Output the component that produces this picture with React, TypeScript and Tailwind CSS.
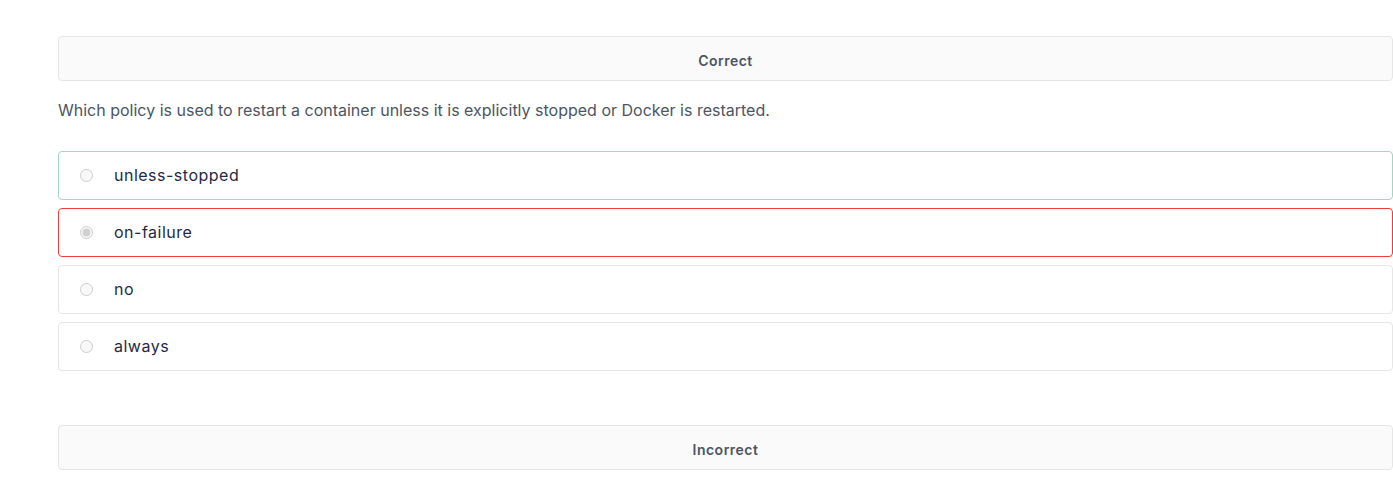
const options = [
  { label: "unless-stopped", state: "correct" },
  { label: "on-failure", state: "wrong" },
  { label: "no", state: "none" },
  { label: "always", state: "none" },
];

const App = () => {
  return (
    <div className="min-h-screen bg-white pl-[58px] pt-[36px] font-['Inter',sans-serif]">
      <div className="flex h-[45px] items-center justify-center rounded border border-[#e6e6e6] bg-[#fafafa] pt-[4px] text-sm font-semibold tracking-[0.5px] text-[#4b5563]">
        Correct
      </div>

      <p className="mt-[17px] text-base leading-6 text-[#4b5563]">
        Which policy is used to restart a container unless it is explicitly stopped or Docker is restarted.
      </p>

      <div className="mt-[29px] flex flex-col gap-2">
        {options.map((o) => (
          <label
            key={o.label}
            className={
              "flex h-[49px] items-center rounded border bg-white pl-[21px] " +
              (o.state === "correct"
                ? "border-[#9fd6c4]"
                : o.state === "wrong"
                ? "border-[#ef3b3b]"
                : "border-[#e6e6e6]")
            }
          >
            <input
              type="radio"
              disabled
              defaultChecked={o.state === "wrong"}
              className="m-0 h-[13px] w-[13px]"
            />
            <span className="-mt-[2px] ml-[21px] text-base tracking-[0.5px] text-[#1f2a44]">{o.label}</span>
          </label>
        ))}
      </div>

      <div className="mt-[54px] flex h-[45px] items-center justify-center rounded border border-[#e6e6e6] bg-[#fafafa] pt-[4px] text-sm font-semibold tracking-[0.5px] text-[#4b5563]">
        Incorrect
      </div>
    </div>
  );
};

export default App;
